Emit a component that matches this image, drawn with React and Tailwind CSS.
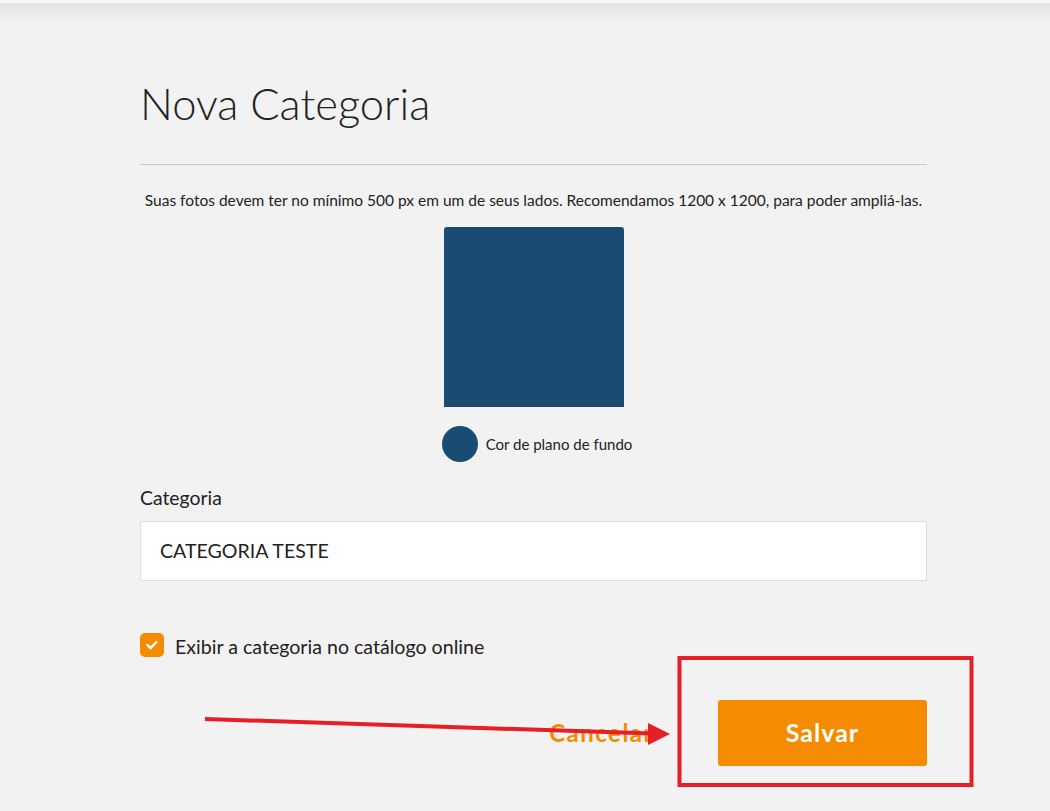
import React from "react";

export default function App() {
  const font = { fontFamily: "Lato, 'Noto Sans', sans-serif" };
  return (
    <div className="relative w-[1050px] h-[811px] bg-[#f2f2f2] overflow-hidden" style={font}>
      <div className="h-[3px] bg-[#f7f7f7]" />
      <div className="h-[18px] bg-gradient-to-b from-[#e3e3e3] to-[#f2f2f2]" />
      <div className="ml-[140px] w-[787px] flex flex-col">
        <h1 className="mt-[58px] text-[43.5px] leading-[48px] font-light text-[#222]">Nova Categoria</h1>
        <div className="mt-[37px] border-t border-[#c8c8c8]" />
        <p className="mt-[25px] text-center text-[15.5px] leading-[20px] text-[#222] whitespace-nowrap">
          Suas fotos devem ter no mínimo 500 px em um de seus lados. Recomendamos 1200 x 1200, para poder ampliá-las.
        </p>
        <div className="mt-[17px] self-center w-[180px] h-[180px] bg-[#1a4c72] rounded-t-[3px]" />
        <div className="mt-[19px] self-center flex items-center gap-[8px] ml-[7px]">
          <div className="w-[36px] h-[36px] rounded-full bg-[#1a4c72]" />
          <span className="text-[15px] text-[#222]">Cor de plano de fundo</span>
        </div>
        <label className="mt-[24px] text-[19.4px] leading-[24px] text-[#222]">Categoria</label>
        <div className="mt-[11px] h-[60px] bg-white border border-[#dcdcdc] rounded-[2px] flex items-center px-[19px] text-[19.6px] text-[#222]">
          CATEGORIA TESTE
        </div>
        <div className="mt-[52px] flex items-center gap-[11px] h-[24px]">
          <div className="w-[24px] h-[24px] rounded-[5px] bg-[#f48b00] flex items-center justify-center">
            <svg width="14" height="14" viewBox="0 0 14 14" fill="none">
              <path d="M2.5 7.2 L5.6 10.2 L11.5 4" stroke="white" strokeWidth="2.4" strokeLinecap="round" strokeLinejoin="round" />
            </svg>
          </div>
          <span className="pt-[4px] text-[19.6px] leading-[24px] text-[#222]">Exibir a categoria no catálogo online</span>
        </div>
        <div className="mt-[43px] flex items-center justify-end">
          <button className="mr-[64px] text-[24px] leading-[30px] font-bold tracking-[1.5px] text-[#f48b00]">Cancelar</button>
          <button className="w-[209px] h-[66px] rounded-[3px] bg-[#f48b00] text-white text-[25px] font-bold tracking-[1px]">Salvar</button>
        </div>
      </div>
      <svg className="absolute left-0 top-0 pointer-events-none" width="1050" height="811">
        <rect x="679.5" y="658" width="292" height="127" fill="none" stroke="#e61e25" strokeWidth="4" />
        <line x1="205" y1="719" x2="652" y2="733.5" stroke="#e61e25" strokeWidth="4" />
        <polygon points="648,723 670,734 648,745" fill="#e61e25" />
      </svg>
    </div>
  );
}
